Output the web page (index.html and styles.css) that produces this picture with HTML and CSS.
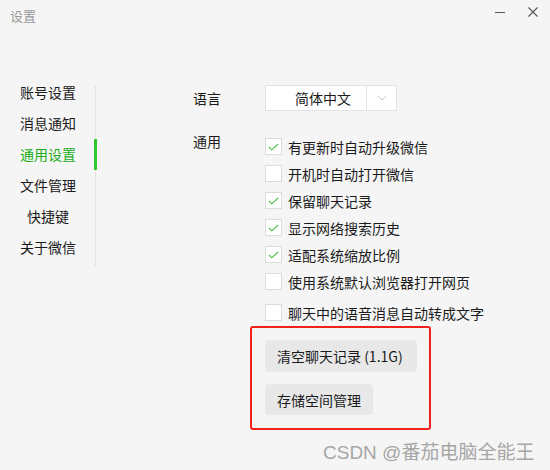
FILE: index.html
```html
<!DOCTYPE html>
<html lang="zh-CN">
<head>
<meta charset="utf-8">
<title>设置</title>
<link rel="stylesheet" href="styles.css">
</head>
<body>
<div class="window">
  <header class="titlebar">
    <span class="title">设置</span>
    <div class="controls">
      <svg class="ctl" width="12" height="12" viewBox="0 0 12 12"><line x1="1" y1="6.5" x2="11" y2="6.5" stroke="#555" stroke-width="1"/></svg>
      <svg class="ctl" width="12" height="12" viewBox="0 0 12 12"><path d="M1.5 1.5 L10.5 10.5 M10.5 1.5 L1.5 10.5" stroke="#555" stroke-width="1.1" fill="none"/></svg>
    </div>
  </header>
  <div class="content">
    <nav class="sidebar">
      <ul class="nav">
        <li class="nav-item">账号设置</li>
        <li class="nav-item">消息通知</li>
        <li class="nav-item active">通用设置</li>
        <li class="nav-item">文件管理</li>
        <li class="nav-item">快捷键</li>
        <li class="nav-item">关于微信</li>
      </ul>
    </nav>
    <main class="main">
      <div class="row lang-row">
        <span class="label">语言</span>
        <div class="select">
          <span class="select-text">简体中文</span>
          <span class="select-arrow">
            <svg width="10" height="6" viewBox="0 0 10 6"><path d="M0.5 0.5 L5 5 L9.5 0.5" stroke="#c8c8c8" stroke-width="1" fill="none"/></svg>
          </span>
        </div>
      </div>
      <div class="row general-row">
        <span class="label label-top">通用</span>
        <div class="options">
          <div class="option"><span class="box checked"><svg width="11" height="8" viewBox="0 0 11 8"><path d="M0.8 3.8 L3.8 6.8 L10.2 0.8" stroke="#3dbb3d" stroke-width="1.1" fill="none"/></svg></span><span>有更新时自动升级微信</span></div>
          <div class="option"><span class="box"></span><span>开机时自动打开微信</span></div>
          <div class="option"><span class="box checked"><svg width="11" height="8" viewBox="0 0 11 8"><path d="M0.8 3.8 L3.8 6.8 L10.2 0.8" stroke="#3dbb3d" stroke-width="1.1" fill="none"/></svg></span><span>保留聊天记录</span></div>
          <div class="option"><span class="box checked"><svg width="11" height="8" viewBox="0 0 11 8"><path d="M0.8 3.8 L3.8 6.8 L10.2 0.8" stroke="#3dbb3d" stroke-width="1.1" fill="none"/></svg></span><span>显示网络搜索历史</span></div>
          <div class="option"><span class="box checked"><svg width="11" height="8" viewBox="0 0 11 8"><path d="M0.8 3.8 L3.8 6.8 L10.2 0.8" stroke="#3dbb3d" stroke-width="1.1" fill="none"/></svg></span><span>适配系统缩放比例</span></div>
          <div class="option"><span class="box"></span><span>使用系统默认浏览器打开网页</span></div>
          <div class="option option-last"><span class="box"></span><span>聊天中的语音消息自动转成文字</span></div>
          <div class="highlight">
            <button class="btn btn-wide">清空聊天记录 (1.1G)</button>
            <button class="btn btn-narrow">存储空间管理</button>
          </div>
        </div>
      </div>
      <div class="watermark">CSDN @番茄电脑全能王</div>
    </main>
  </div>
</div>
</body>
</html>
```

FILE: styles.css
```css
* { box-sizing: border-box; }
html, body {
  margin: 0;
  padding: 0;
  width: 550px;
  height: 470px;
  overflow: hidden;
  background: #f5f5f5;
  font-family: "Noto Sans CJK SC", "Noto Sans", sans-serif;
  font-size: 14px;
  color: #1a1a1a;
}
.window {
  width: 550px;
  height: 470px;
  display: flex;
  flex-direction: column;
}
.titlebar {
  height: 32px;
  display: flex;
  align-items: center;
  justify-content: space-between;
  padding: 0 10px 0 10px;
}
.title {
  font-size: 13px;
  color: #9a9a9a;
  line-height: 16px;
  margin-top: 0;
}
.controls {
  display: flex;
  align-items: center;
  gap: 21px;
  margin-top: -8px;
  padding-right: 1px;
}
.ctl { display: block; }

.content {
  flex: 1;
  display: flex;
}
.sidebar {
  width: 96px;
  flex: none;
  padding-top: 45px;
}
.nav {
  list-style: none;
  margin: 0;
  padding: 0;
  position: relative;
}
.nav::before {
  content: "";
  position: absolute;
  left: 95px;
  top: 9px;
  width: 1px;
  height: 180px;
  background: #e2e2e2;
}
.nav-item {
  height: 31px;
  line-height: 31px;
  text-align: center;
  width: 96px;
  position: relative;
  font-size: 14px;
  color: #1a1a1a;
}
.nav-item.active {
  color: #1aad19;
}
.nav-item.active::after {
  content: "";
  position: absolute;
  left: 94px;
  top: 0;
  width: 3px;
  height: 31px;
  background: #2fc82f;
}

.main {
  flex: 1;
  padding-left: 97px;
  padding-top: 53px;
  display: flex;
  flex-direction: column;
}
.row {
  display: flex;
}
.label {
  width: 72px;
  flex: none;
  line-height: 16px;
  font-size: 14px;
}
.lang-row {
  align-items: center;
  height: 26px;
}
.select {
  width: 132px;
  height: 26px;
  background: #fff;
  border: 1px solid #e2e2e2;
  display: flex;
}
.select-text {
  flex: 1;
  border-right: 1px solid #e2e2e2;
  line-height: 24px;
  padding-left: 29px;
  font-size: 14px;
}
.select-arrow {
  width: 29px;
  display: flex;
  align-items: center;
  justify-content: center;
}
.general-row {
  margin-top: 22px;
}
.options {
  display: flex;
  flex-direction: column;
}
.option {
  height: 27px;
  display: flex;
  align-items: center;
  gap: 6px;
  font-size: 14px;
}
.option-last {
  margin-top: 4px;
}
.box {
  width: 17px;
  height: 17px;
  background: #fff;
  border: 1px solid #dcdcdc;
  display: flex;
  align-items: center;
  justify-content: center;
}
.box svg { display: block; margin-top: 0; }

.highlight {
  margin-left: -15px;
  margin-top: 0;
  width: 181px;
  border: 2px solid #f2211b;
  border-radius: 3px;
  padding: 12px 0 13px 13px;
  display: flex;
  flex-direction: column;
  align-items: flex-start;
  gap: 12px;
}
.btn {
  font-family: "Noto Sans CJK SC", "Noto Sans", sans-serif;
  font-size: 14px;
  color: #1a1a1a;
  background: #e8e8e8;
  border: none;
  border-radius: 4px;
  padding: 0 12px;
  text-align: left;
}
.btn-wide { width: 152px; height: 32px; }
.btn-narrow { width: 108px; height: 31px; }

.watermark {
  margin-top: 12px;
  margin-left: 130px;
  font-family: "Liberation Sans", "Noto Sans CJK SC", sans-serif;
  font-size: 19px;
  line-height: 22px;
  color: #a6a6a6;
  white-space: nowrap;
}
```
